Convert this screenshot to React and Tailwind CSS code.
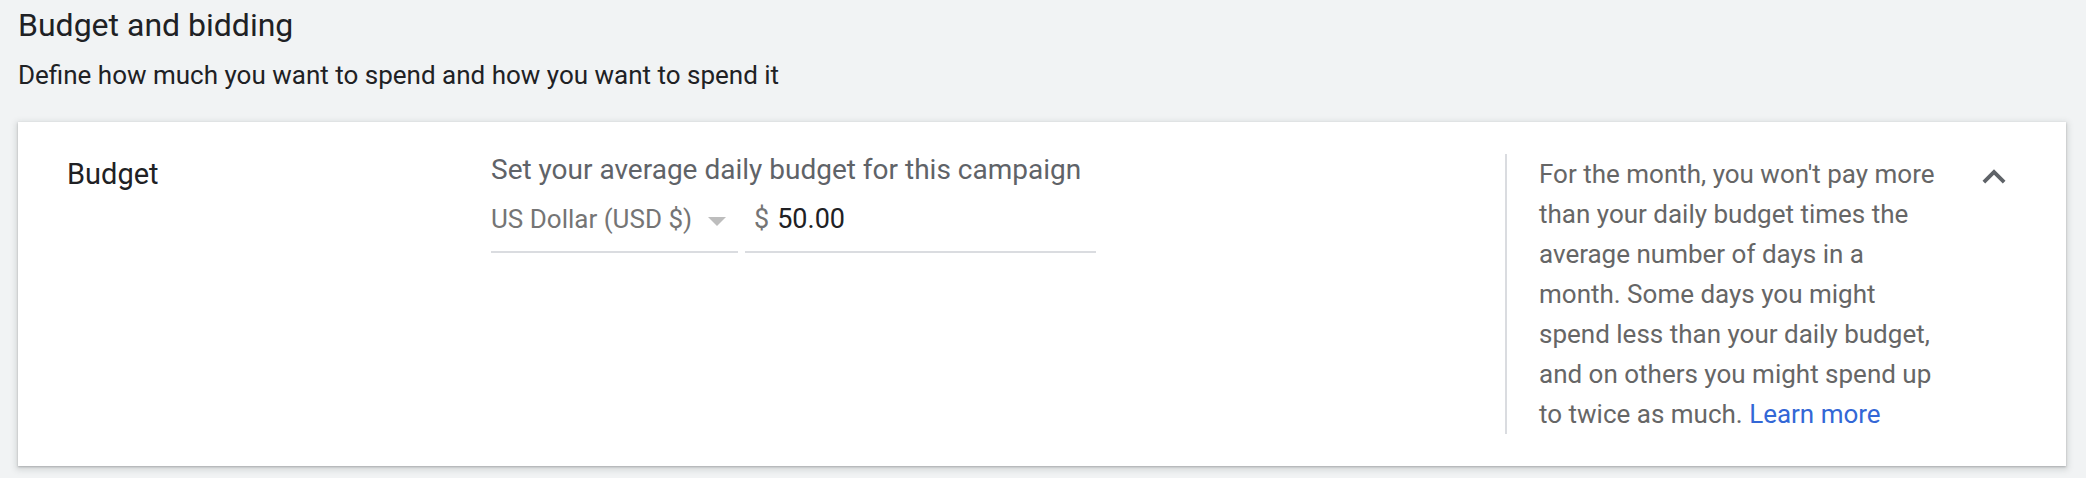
import React from 'react';

function Chevron() {
  return (
    <svg viewBox="0 0 24 24" className="w-[46px] h-[46px] fill-[#5f6368]">
      <path d="M12 8l-6 6 1.41 1.41L12 10.83l4.59 4.58L18 14z" />
    </svg>
  );
}

function CurrencySelect() {
  return (
    <div className="w-[247px] flex items-center border-b-2 border-[#dadce0] pb-[16px]">
      <span className="text-[26px] leading-[32px] text-[#757575]">US Dollar (USD $)</span>
      <span className="ml-[16px] mt-[4px] w-0 h-0 border-l-[9px] border-r-[9px] border-t-[9px] border-l-transparent border-r-transparent border-t-[#bdbdbd]" />
    </div>
  );
}

function AmountInput() {
  return (
    <div className="w-[351px] flex items-center border-b-2 border-[#dadce0] pb-[16px] pl-[9px]">
      <span className="text-[27px] leading-[32px] text-[#757575]">$</span>
      <span className="ml-[8px] text-[27px] leading-[32px] text-[#202124]">50.00</span>
    </div>
  );
}

export default function App() {
  return (
    <div className="min-h-screen bg-[#f1f3f4] pl-[18px] pr-[20px] pt-[5px] font-['Roboto',sans-serif]">
      <h1 className="text-[32px] leading-[40px] text-[#202124]">Budget and bidding</h1>
      <p className="mt-[14px] text-[26px] leading-[32px] text-[#202124]">
        Define how much you want to spend and how you want to spend it
      </p>

      <div className="mt-[31px] bg-white flex py-[32px] pr-[49px] shadow-[0_1px_2px_rgba(60,64,67,0.3),0_2px_6px_2px_rgba(60,64,67,0.15)]">
        <div className="w-[473px] shrink-0 pl-[49px]">
          <h2 className="text-[29px] leading-[40px] text-[#202124]">Budget</h2>
        </div>

        <div className="flex-1">
          <p className="text-[28px] leading-[32px] text-[#5f6368]">
            Set your average daily budget for this campaign
          </p>
          <div className="mt-[17px] flex gap-[7px]">
            <CurrencySelect />
            <AmountInput />
          </div>
        </div>

        <div className="w-[454px] shrink-0 border-l-2 border-[#dadce0] pl-[32px]">
          <p className="text-[26px] leading-[40px] text-[#666666]">
            For the month, you won't pay more
            <br />
            than your daily budget times the
            <br />
            average number of days in a
            <br />
            month. Some days you might
            <br />
            spend less than your daily budget,
            <br />
            and on others you might spend up
            <br />
            to twice as much. <a className="text-[#3367d6]">Learn more</a>
          </p>
        </div>

        <div className="ml-[12px] shrink-0">
          <Chevron />
        </div>
      </div>
    </div>
  );
}
